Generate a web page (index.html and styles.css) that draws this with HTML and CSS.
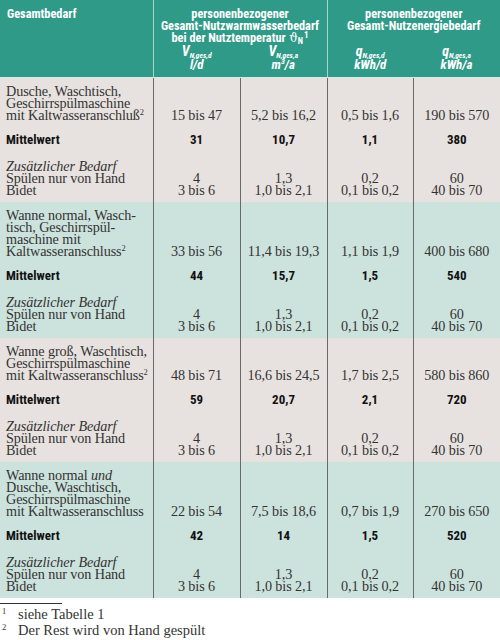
FILE: index.html
```html
<!DOCTYPE html>
<html lang="de">
<head>
<meta charset="utf-8">
<link rel="stylesheet" href="styles.css">
</head>
<body>
<table class="t">
  <colgroup>
    <col class="c1"><col class="c2"><col class="c3"><col class="c4"><col class="c5">
  </colgroup>
  <thead>
    <tr class="h1">
      <th rowspan="2" class="gb">Gesamtbedarf</th>
      <th colspan="2" class="grp">personenbezogener<br>Gesamt-Nutzwarmwasserbedarf<br>bei der Nutztemperatur <span class="theta">ϑ</span><sub class="ts">N</sub><sup class="tsup">1</sup></th>
      <th colspan="2" class="grp">personenbezogener<br>Gesamt-Nutzenergiebedarf</th>
    </tr>
    <tr class="h2">
      <th class="sh grp"><span class="sym">V</span><sub>N,ges,d</sub><br>l/d</th>
      <th class="sh"><span class="sym">V</span><sub>N,ges,a</sub><br>m<sup>3</sup>/a</th>
      <th class="sh grp"><span class="sym">q</span><sub>N,ges,d</sub><br>kWh/d</th>
      <th class="sh"><span class="sym">q</span><sub>N,ges,a</sub><br>kWh/a</th>
    </tr>
  </thead>
  <tbody class="gray">
    <tr class="desc"><td>Dusche, Waschtisch,<br>Geschirrspülmaschine<br>mit Kaltwasseranschluß<sup>2</sup></td><td>15 bis 47</td><td>5,2 bis 16,2</td><td>0,5 bis 1,6</td><td>190 bis 570</td></tr>
    <tr class="mw"><td>Mittelwert</td><td>31</td><td>10,7</td><td>1,1</td><td>380</td></tr>
    <tr class="zu"><td><i>Zusätzlicher Bedarf</i><br>Spülen nur von Hand<br>Bidet</td><td>4<br>3 bis 6</td><td>1,3<br>1,0 bis 2,1</td><td>0,2<br>0,1 bis 0,2</td><td>60<br>40 bis 70</td></tr>
  </tbody>
  <tbody class="teal">
    <tr class="desc"><td>Wanne normal, Wasch-<br>tisch, Geschirrspül-<br>maschine mit<br>Kaltwasseranschluss<sup>2</sup></td><td>33 bis 56</td><td>11,4 bis 19,3</td><td>1,1 bis 1,9</td><td>400 bis 680</td></tr>
    <tr class="mw"><td>Mittelwert</td><td>44</td><td>15,7</td><td>1,5</td><td>540</td></tr>
    <tr class="zu"><td><i>Zusätzlicher Bedarf</i><br>Spülen nur von Hand<br>Bidet</td><td>4<br>3 bis 6</td><td>1,3<br>1,0 bis 2,1</td><td>0,2<br>0,1 bis 0,2</td><td>60<br>40 bis 70</td></tr>
  </tbody>
  <tbody class="gray">
    <tr class="desc"><td>Wanne groß, Waschtisch,<br>Geschirrspülmaschine<br>mit Kaltwasseranschluss<sup>2</sup></td><td>48 bis 71</td><td>16,6 bis 24,5</td><td>1,7 bis 2,5</td><td>580 bis 860</td></tr>
    <tr class="mw"><td>Mittelwert</td><td>59</td><td>20,7</td><td>2,1</td><td>720</td></tr>
    <tr class="zu"><td><i>Zusätzlicher Bedarf</i><br>Spülen nur von Hand<br>Bidet</td><td>4<br>3 bis 6</td><td>1,3<br>1,0 bis 2,1</td><td>0,2<br>0,1 bis 0,2</td><td>60<br>40 bis 70</td></tr>
  </tbody>
  <tbody class="teal">
    <tr class="desc"><td>Wanne normal <i>und</i><br>Dusche, Waschtisch,<br>Geschirrspülmaschine<br>mit Kaltwasseranschluss</td><td>22 bis 54</td><td>7,5 bis 18,6</td><td>0,7 bis 1,9</td><td>270 bis 650</td></tr>
    <tr class="mw"><td>Mittelwert</td><td>42</td><td>14</td><td>1,5</td><td>520</td></tr>
    <tr class="zu"><td><i>Zusätzlicher Bedarf</i><br>Spülen nur von Hand<br>Bidet</td><td>4<br>3 bis 6</td><td>1,3<br>1,0 bis 2,1</td><td>0,2<br>0,1 bis 0,2</td><td>60<br>40 bis 70</td></tr>
  </tbody>
</table>
<div class="notes">
  <div class="rule"></div>
  <p class="fn"><span class="fnum">1</span><span>siehe Tabelle 1</span></p>
  <p class="fn"><span class="fnum">2</span><span>Der Rest wird von Hand gespült</span></p>
</div>
</body>
</html>
```

FILE: styles.css
```css
html, body {
  margin: 0;
  padding: 0;
  background: #ffffff;
}

body {
  width: 500px;
  font-family: "Liberation Serif", "DejaVu Serif", serif;
  color: #333333;
}

.t {
  width: 500px;
  border-collapse: collapse;
  table-layout: fixed;
}

.c1 { width: 153px; }
.c2 { width: 87px; }
.c3 { width: 87px; }
.c4 { width: 86px; }
.c5 { width: 87px; }

thead th {
  background: #2f9a88;
  color: #ffffff;
  font-family: "Roboto Condensed", "Open Sans Condensed", "DejaVu Sans Condensed", sans-serif;
  font-stretch: condensed;
  font-weight: bold;
  font-size: 12.3px;
  line-height: 12px;
  text-align: center;
  vertical-align: top;
  padding: 0;
  white-space: nowrap;
}

.h1 th {
  padding-top: 8px;
}

.h1 th.gb {
  text-align: left;
  padding-left: 7px;
}

th.grp {
  border-left: 1px solid #a9d3c9;
}

thead tr.h2 th,
thead th.gb {
  border-bottom: 1px solid #dbe9e5;
}

.theta {
  font-family: "DejaVu Serif", "Liberation Serif", serif;
  font-weight: normal;
  font-size: 13px;
  line-height: 0;
  margin-left: 1px;
}

.ts {
  font-size: 8.5px;
  vertical-align: -2px;
  line-height: 0;
}

.tsup {
  font-size: 9px;
  vertical-align: 4px;
  line-height: 0;
  margin-left: 1px;
}

.sh {
  font-style: italic;
  font-size: 13px;
  vertical-align: bottom;
}

.h2 .sh {
  line-height: 13px;
  padding-top: 1px;
  padding-bottom: 6px;
}

.sym {
  font-size: 14px;
  line-height: 0;
}

.sh sub {
  font-size: 7.5px;
  vertical-align: -2px;
  line-height: 0;
}

.sh sup {
  font-size: 8px;
  vertical-align: 5px;
  line-height: 0;
}

tbody td {
  font-size: 14.2px;
  letter-spacing: -0.1px;
  line-height: 12px;
  padding: 0;
  text-align: center;
  vertical-align: bottom;
  border-left: 1px solid #6a6a6a;
  color: #333333;
  white-space: nowrap;
}

tbody td:first-child {
  text-align: left;
  padding-left: 6px;
  border-left: none;
}

tbody td sup {
  font-size: 8.5px;
  vertical-align: 5px;
  line-height: 0;
}

.gray { background: #e7e2df; }
.teal { background: #cce2dc; }

.desc td {
  padding-top: 7px;
  padding-bottom: 7px;
}

.mw td {
  padding-top: 6px;
  padding-bottom: 7px;
  font-family: "Roboto Condensed", "Open Sans Condensed", "DejaVu Sans Condensed", sans-serif;
  font-stretch: condensed;
  font-weight: bold;
  font-size: 13px;
  letter-spacing: 0;
  color: #111111;
}

.zu td {
  padding-top: 7px;
  padding-bottom: 6px;
}

.notes {
  padding-top: 5px;
}

.rule {
  width: 62px;
  height: 1px;
  background: #333333;
}

.fn {
  margin: 0;
  display: flex;
  font-size: 14.5px;
  line-height: 16px;
  color: #333333;
}

.notes .rule + .fn {
  margin-top: 2px;
}

.fnum {
  width: 18px;
  padding-left: 2px;
  box-sizing: border-box;
  font-size: 8.5px;
  line-height: 10px;
}
```
